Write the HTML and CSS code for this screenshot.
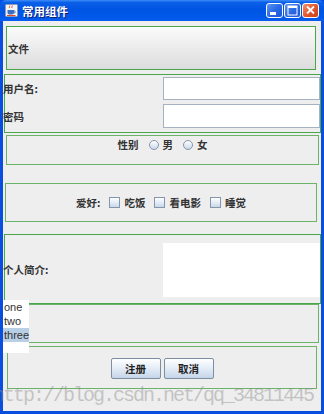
FILE: index.html
```html
<!DOCTYPE html>
<html lang="zh-CN">
<head>
<meta charset="UTF-8">
<title>常用组件</title>
<link rel="stylesheet" href="styles.css">
</head>
<body>

<div class="window">
  <div class="titlebar">
    <svg class="app-icon" width="13" height="13" viewBox="0 0 13 13">
      <rect x="0.5" y="0.5" width="12" height="12" rx="1" fill="#f4f4f4" stroke="#8a9ab8"/>
      <path d="M4 4 C5 3 4 2 5 1.5 M6.5 4 C7.5 3 6.5 2 7.5 1.5" stroke="#e0442a" stroke-width="0.9" fill="none"/>
      <path d="M2.5 6 H9 V8.5 C9 10 8 10.5 6.5 10.5 H5 C3.5 10.5 2.5 10 2.5 8.5 Z" fill="#3a6fc8"/>
      <path d="M9 6.8 C10.8 6.8 10.8 9 9 9" stroke="#3a6fc8" stroke-width="0.9" fill="none"/>
      <rect x="2" y="11" width="8.5" height="1" fill="#e0442a"/>
    </svg>
    <span class="title">常用组件</span>
    <div class="caption-btns">
      <div class="cap-btn">
        <svg width="17" height="15" viewBox="0 0 17 15"><rect x="4" y="9" width="6" height="3" fill="#fff"/></svg>
      </div>
      <div class="cap-btn">
        <svg width="17" height="15" viewBox="0 0 17 15"><rect x="4" y="3" width="9" height="9" fill="none" stroke="#fff" stroke-width="1"/><rect x="4" y="3" width="9" height="2" fill="#fff"/></svg>
      </div>
      <div class="cap-btn close">
        <svg width="17" height="15" viewBox="0 0 17 15"><path d="M5 3.5 L12 10.5 M12 3.5 L5 10.5" stroke="#fff" stroke-width="1.8"/></svg>
      </div>
    </div>
  </div>

  <div class="client">
    <div class="panel menu-panel">
      <span class="menu-item">文件</span>
    </div>

    <div class="panel login-panel">
      <label class="lbl">用户名:</label>
      <div class="field"></div>
      <label class="lbl">密码</label>
      <div class="field"></div>
    </div>

    <div class="panel gender-panel">
      <span class="lbl">性别</span>
      <span class="opt"><span class="radio"></span>男</span>
      <span class="opt"><span class="radio"></span>女</span>
    </div>

    <div class="panel hobby-panel">
      <span class="lbl">爱好:</span>
      <span class="opt"><span class="check"></span>吃饭</span>
      <span class="opt"><span class="check"></span>看电影</span>
      <span class="opt"><span class="check"></span>睡觉</span>
    </div>

    <div class="panel intro-panel">
      <label class="lbl">个人简介:</label>
      <div class="textarea"></div>
    </div>

    <div class="panel list-panel"></div>

    <div class="panel btn-panel">
      <button class="jbtn">注册</button>
      <button class="jbtn">取消</button>
    </div>

    <ul class="list">
      <li>one</li>
      <li>two</li>
      <li class="selected">three</li>
    </ul>
  </div>

  <div class="watermark">http://blog.csdn.net/qq_34811445</div>
</div>

</body>
</html>
```

FILE: styles.css
```css
* { margin: 0; padding: 0; box-sizing: border-box; }

body {
  font-family: "Noto Sans CJK SC", "Liberation Sans", sans-serif;
  background: #fff;
  width: 324px;
  height: 414px;
  overflow: hidden;
}

.window {
  position: relative;
  width: 324px;
  height: 414px;
  background: #0a4ee0;
  padding: 0 3px 3px 3px;
  display: flex;
  flex-direction: column;
  overflow: hidden;
}

/* title bar */
.titlebar {
  height: 21px;
  margin: 0 -3px;
  padding: 0 5px;
  display: flex;
  align-items: center;
  background: linear-gradient(to bottom, #3d8cf7 0%, #0a5fe8 12%, #0054e3 45%, #0058ea 85%, #0a5ff0 100%);
  border-radius: 6px 6px 0 0;
  flex-shrink: 0;
}

.app-icon { flex-shrink: 0; margin-top: -1px; }

.title {
  margin-left: 4px;
  font-size: 11.5px;
  font-weight: 700;
  color: #fff;
  text-shadow: 1px 1px 0 #0a1c7a;
  flex: 1;
}

.caption-btns { display: flex; gap: 1px; }

.cap-btn {
  width: 17px;
  height: 15px;
  border: 1px solid #fff;
  border-radius: 3px;
  background: linear-gradient(135deg, #5d96f4 0%, #2a6ae6 50%, #1c56d8 100%);
  display: flex;
  align-items: center;
  justify-content: center;
  overflow: hidden;
}
.cap-btn svg { flex-shrink: 0; }
.cap-btn.close { background: linear-gradient(135deg, #f09270 0%, #e4572e 50%, #c8411c 100%); }

/* content area */
.client {
  position: relative;
  flex: 1;
  background: #eeeeee;
  display: flex;
  flex-direction: column;
  font-size: 10.5px;
  font-weight: 700;
  color: #333;
}

.panel {
  border: 1px solid #4aa64a;
  flex-shrink: 0;
}

.menu-panel {
  margin: 5px 0 0 3px;
  width: 310px;
  height: 44px;
  background: linear-gradient(to bottom, #fbfbfb, #dcdcdc);
  display: flex;
  align-items: center;
  padding-left: 1px;
}

.login-panel {
  margin: 4px 0 0 1px;
  width: 317px;
  height: 59px;
  display: grid;
  grid-template-columns: 1fr 157px;
  grid-template-rows: 23px 24px;
  row-gap: 4px;
  padding-top: 2px;
  align-items: center;
}

.login-panel .lbl,
.intro-panel .lbl { margin-left: -2px; }

.field {
  height: 100%;
  background: #fff;
  border: 1px solid #a4b2c2;
}

.gender-panel {
  margin: 2px 0 0 3px;
  width: 313px;
  height: 30px;
  border-color: #6ab46a;
  display: flex;
  justify-content: center;
  align-items: flex-start;
  padding: 1px 0 0 0;
  gap: 9px;
}

.hobby-panel {
  margin: 18px 0 0 2px;
  width: 312px;
  height: 39px;
  border-color: #6ab46a;
  display: flex;
  justify-content: center;
  align-items: center;
  gap: 8px;
}

.opt {
  display: flex;
  align-items: center;
  gap: 4px;
  margin-left: 1px;
}

.radio {
  width: 10px;
  height: 10px;
  border-radius: 50%;
  border: 1px solid #8596ac;
  background: linear-gradient(to bottom, #ffffff, #c9d8ea);
}

.check {
  width: 11px;
  height: 11px;
  border: 1px solid #8596ac;
  background: linear-gradient(to bottom, #ffffff, #c9d8ea);
}

.intro-panel {
  margin: 12px 0 0 1px;
  width: 317px;
  height: 70px;
  display: grid;
  grid-template-columns: 1fr 157px;
  align-items: center;
}

.textarea {
  height: 54px;
  background: #fff;
  margin-top: 1px;
}

.list-panel {
  margin: 0 0 0 1px;
  width: 315px;
  height: 39px;
  border-color: #6ab46a;
}

.btn-panel {
  margin: 3px 0 0 4px;
  width: 310px;
  height: 43px;
  border-color: #6ab46a;
  display: flex;
  justify-content: center;
  align-items: center;
  gap: 3px;
  padding-top: 1px;
}

.jbtn {
  width: 50px;
  height: 21px;
  border: 1px solid #7d8ea3;
  border-radius: 2px;
  background: linear-gradient(to bottom, #ffffff 0%, #e6eef7 45%, #c5d5e8 100%);
  font-family: inherit;
  font-size: 10.5px;
  font-weight: 700;
  color: #222;
}

/* popup list overlaying the panels */
.list {
  position: absolute;
  left: 0;
  top: 279px;
  width: 26px;
  height: 53px;
  background: #fff;
  list-style: none;
  font-family: "Liberation Sans", sans-serif;
  font-size: 11px;
  font-weight: 400;
  color: #333;
}
.list li {
  height: 14px;
  line-height: 14px;
  padding-left: 1px;
}
.list li.selected { background: #b8cfe5; }

.watermark {
  position: absolute;
  left: -7px;
  top: 386px;
  font-family: "Liberation Mono", monospace;
  font-size: 20px;
  line-height: 20px;
  letter-spacing: -2px;
  color: rgba(140, 140, 140, 0.45);
  white-space: nowrap;
  pointer-events: none;
}
```
